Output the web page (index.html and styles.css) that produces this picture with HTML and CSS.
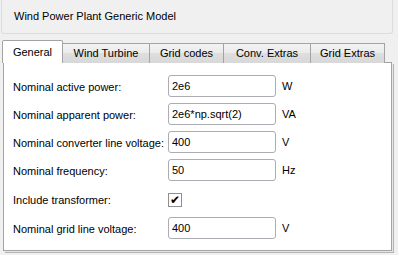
FILE: index.html
```html
<!DOCTYPE html>
<html lang="en">
<head>
    <meta charset="UTF-8">
    <title>Wind Power Plant Generic Model</title>
    <link rel="stylesheet" href="styles.css">
</head>
<body>
    <div class="header">
        <span class="title">Wind Power Plant Generic Model</span>
    </div>

    <div class="tabs">
        <div class="tab active">General</div>
        <div class="tab">Wind Turbine</div>
        <div class="tab">Grid codes</div>
        <div class="tab">Conv. Extras</div>
        <div class="tab">Grid Extras</div>
    </div>

    <div class="pane">
        <div class="row">
            <label>Nominal active power:</label>
            <div class="field">2e6</div>
            <span class="unit">W</span>
        </div>
        <div class="row">
            <label>Nominal apparent power:</label>
            <div class="field">2e6*np.sqrt(2)</div>
            <span class="unit">VA</span>
        </div>
        <div class="row">
            <label>Nominal converter line voltage:</label>
            <div class="field">400</div>
            <span class="unit">V</span>
        </div>
        <div class="row">
            <label>Nominal frequency:</label>
            <div class="field">50</div>
            <span class="unit">Hz</span>
        </div>
        <div class="row check-row">
            <label>Include transformer:</label>
            <div class="checkbox">&#10004;</div>
        </div>
        <div class="row">
            <label>Nominal grid line voltage:</label>
            <div class="field">400</div>
            <span class="unit">V</span>
        </div>
    </div>
</body>
</html>
```

FILE: styles.css
```css
* {
    margin: 0;
    padding: 0;
    box-sizing: border-box;
}

body {
    background: #f0f0f0;
    font-family: 'Liberation Sans', Arial, sans-serif;
    font-size: 11px;
    color: #000;
    width: 398px;
    height: 255px;
    overflow: hidden;
}

.header {
    margin: 0 5px 0 1px;
    height: 34px;
    border: 1px solid #dcdcdc;
    border-top: none;
    border-radius: 0 0 3px 3px;
    padding: 9px 0 0 12px;
}

.title {
    line-height: 14px;
}

.tabs {
    display: flex;
    align-items: flex-end;
    margin: 6px 0 0 2px;
    height: 23px;
    position: relative;
    z-index: 1;
}

.tab {
    height: 20px;
    line-height: 18px;
    text-align: center;
    border: 1px solid #a3a3a3;
    border-bottom: none;
    border-left: none;
    background: linear-gradient(#f3f3f3, #ebebeb 45%, #dedede 50%, #d8d8d8);
}

.tab:nth-child(2) { width: 87px; }
.tab:nth-child(3) { width: 74px; }
.tab:nth-child(4) { width: 87px; }
.tab:nth-child(5) { width: 74px; }

.tab.active {
    width: 61px;
    height: 23px;
    line-height: 23px;
    background: #fff;
    border-left: 1px solid #a3a3a3;
    border-radius: 2px 2px 0 0;
}

.pane {
    margin: -1px 6px 0 3px;
    height: 189px;
    background: #fff;
    border: 1px solid #a3a3a3;
    box-shadow: 1px 1px 0 #e6e6e6, 2px 2px 0 #b4b4b4;
    padding: 12px 0 0 9px;
    display: flex;
    flex-direction: column;
    gap: 6px;
}

.row {
    display: flex;
    align-items: center;
    height: 22px;
}

.row label {
    width: 155px;
    padding-top: 1px;
}

.field {
    width: 108px;
    height: 22px;
    border: 1px solid #abadb3;
    border-radius: 3px;
    padding: 0 3px;
    line-height: 20px;
}

.unit {
    margin-left: 6px;
}

.check-row {
    height: 24px;
}

.checkbox {
    width: 14px;
    height: 14px;
    border: 1px solid #8f8f8f;
    font-size: 12px;
    line-height: 12px;
    text-align: center;
    font-family: 'DejaVu Sans', sans-serif;
    margin-top: 1px;
}
```
